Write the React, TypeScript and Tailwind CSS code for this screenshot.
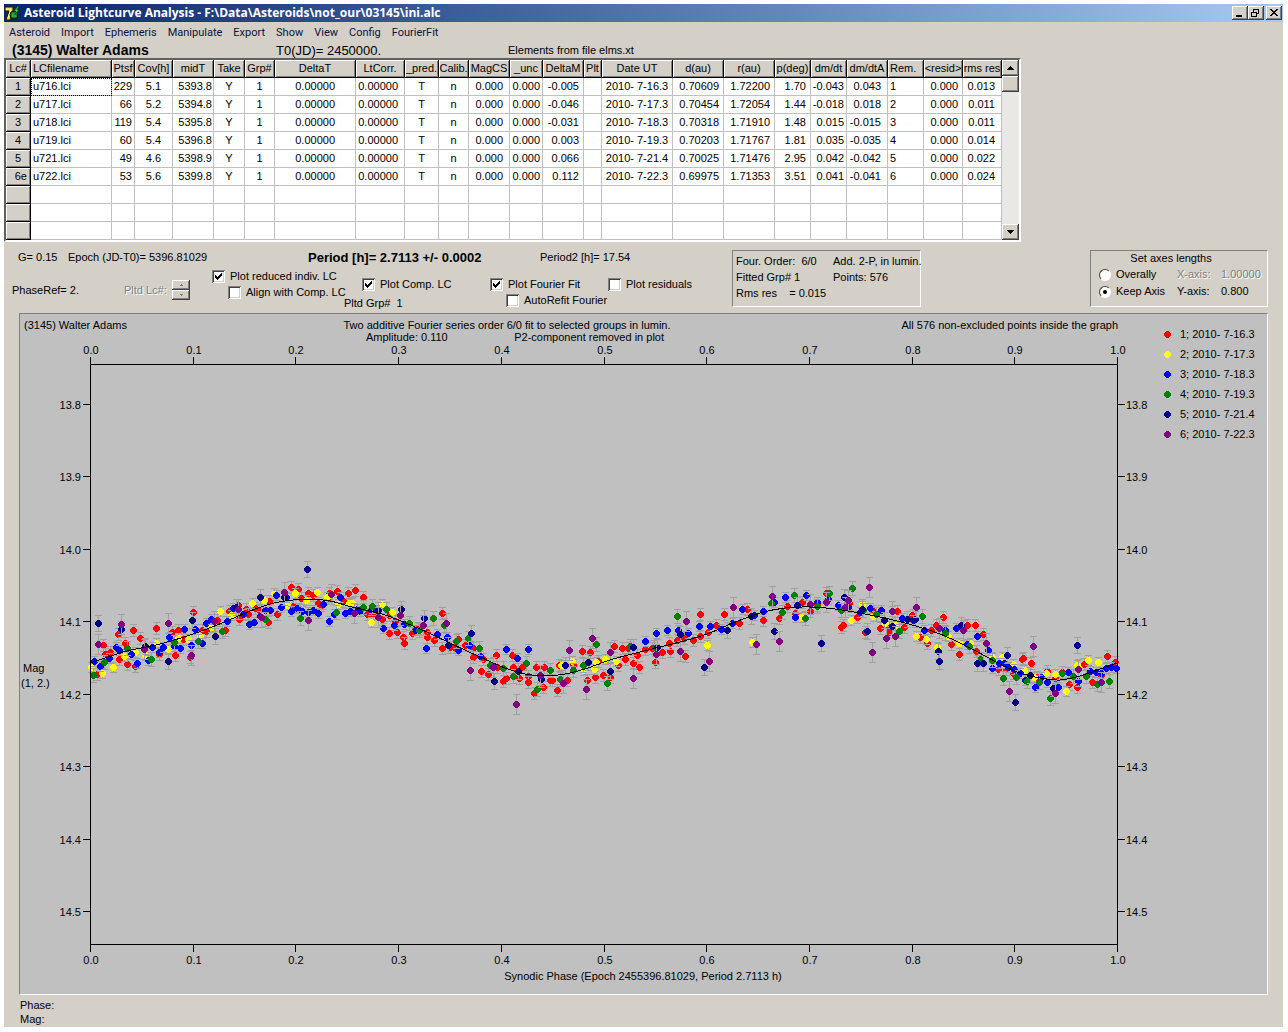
import { Fragment, useState } from 'react';
import type { ReactNode } from 'react';

type Column = {
  title: string;
  width: string;
  cell: string;
  head?: string;
};

type Series = {
  label: string;
  color: string;
  error: number;
  points: number[][];
};

const MENU = ['Asteroid', 'Import', 'Ephemeris', 'Manipulate', 'Export', 'Show', 'View', 'Config', 'FourierFit'];

const COLUMNS: Column[] = [
  { title: 'LCfilename', width: 'w-[81px]', cell: 'text-left pl-[2px]', head: 'text-left pl-[2px]' },
  { title: 'Ptsf', width: 'w-[23px]', cell: 'text-right pr-[2px]' },
  { title: 'Cov[h]', width: 'w-[38px]', cell: 'text-center' },
  { title: 'midT', width: 'w-[41px]', cell: 'text-right pr-px' },
  { title: 'Take', width: 'w-[31px]', cell: 'text-center' },
  { title: 'Grp#', width: 'w-[30px]', cell: 'text-center' },
  { title: 'DeltaT', width: 'w-[81px]', cell: 'text-right pr-5' },
  { title: 'LtCorr.', width: 'w-[49px]', cell: 'text-right pr-[6px]' },
  { title: '_pred.', width: 'w-[34px]', cell: 'text-center' },
  { title: 'Calib.', width: 'w-[30px]', cell: 'text-center' },
  { title: 'MagCS', width: 'w-[41px]', cell: 'text-right pr-[6px]' },
  { title: '_unc', width: 'w-[33px]', cell: 'text-right pr-[2px]' },
  { title: 'DeltaM', width: 'w-[41px]', cell: 'text-right pr-[4px]' },
  { title: 'Plt', width: 'w-[18px]', cell: 'text-center' },
  { title: 'Date UT', width: 'w-[71px]', cell: 'text-center' },
  { title: 'd(au)', width: 'w-[51px]', cell: 'text-right pr-[4px]' },
  { title: 'r(au)', width: 'w-[51px]', cell: 'text-right pr-[4px]' },
  { title: 'p(deg)', width: 'w-[36px]', cell: 'text-right pr-[4px]' },
  { title: 'dm/dt', width: 'w-[36px]', cell: 'text-right pr-[2px]' },
  { title: 'dm/dtA', width: 'w-[41px]', cell: 'text-right pr-[6px]' },
  { title: 'Rem.', width: 'w-[36px]', cell: 'text-left pl-[2px]', head: 'text-left pl-[2px]' },
  { title: '<resid>', width: 'w-[39px]', cell: 'text-right pr-[4px]' },
  { title: 'rms res', width: 'w-[39px]', cell: 'text-right pr-[6px]' },
];

const row = (
  file: string, pts: string, cov: string, mid: string, delta: string, date: string,
  d: string, r: string, p: string, dm: string, dmA: string, rem: string, rms: string,
) => [file, pts, cov, mid, 'Y', '1', '0.00000', '0.00000', 'T', 'n', '0.000', '0.000', delta, '', date, d, r, p, dm, dmA, rem, '0.000', rms];

const ROWS: { id: string; cells: string[] }[] = [
  { id: '1', cells: row('u716.lci', '229', '5.1', '5393.8', '-0.005', '2010- 7-16.3', '0.70609', '1.72200', '1.70', '-0.043', '0.043', '1', '0.013') },
  { id: '2', cells: row('u717.lci', '66', '5.2', '5394.8', '-0.046', '2010- 7-17.3', '0.70454', '1.72054', '1.44', '-0.018', '0.018', '2', '0.011') },
  { id: '3', cells: row('u718.lci', '119', '5.4', '5395.8', '-0.031', '2010- 7-18.3', '0.70318', '1.71910', '1.48', '0.015', '-0.015', '3', '0.011') },
  { id: '4', cells: row('u719.lci', '60', '5.4', '5396.8', '0.003', '2010- 7-19.3', '0.70203', '1.71767', '1.81', '0.035', '-0.035', '4', '0.014') },
  { id: '5', cells: row('u721.lci', '49', '4.6', '5398.9', '0.066', '2010- 7-21.4', '0.70025', '1.71476', '2.95', '0.042', '-0.042', '5', '0.022') },
  { id: '6e', cells: row('u722.lci', '53', '5.6', '5399.8', '0.112', '2010- 7-22.3', '0.69975', '1.71353', '3.51', '0.041', '-0.041', '6', '0.024') },
  { id: '', cells: COLUMNS.map(() => '') },
  { id: '', cells: COLUMNS.map(() => '') },
  { id: '', cells: COLUMNS.map(() => '') },
];

// Points are kept in chart units, the same ones the axes below use
const SERIES: Series[] = [
  {
    label: '1; 2010- 7-16.3',
    color: '#ff0000',
    error: 6,
    points: [
      [97, 674], [103, 645], [105, 654], [110, 652], [118, 634], [119, 659], [125, 643], [127, 664], [133, 630], [135, 666],
      [140, 638], [156, 628], [159, 654], [175, 655], [172, 632], [178, 630], [183, 639], [190, 657], [193, 612], [202, 630],
      [206, 631], [217, 620], [225, 630], [229, 611], [238, 605], [239, 619], [246, 609], [248, 614], [255, 608], [259, 610],
      [269, 601], [268, 622], [277, 614], [291, 587], [298, 589], [301, 598], [293, 606], [308, 593], [313, 595], [318, 603],
      [321, 605], [329, 593], [337, 591], [348, 593], [355, 590], [343, 601], [328, 598], [352, 603], [363, 597], [367, 614],
      [371, 614], [375, 613], [382, 619], [389, 633], [389, 615], [395, 621], [397, 632], [403, 637], [404, 643], [412, 633],
      [418, 628], [427, 632], [427, 637], [434, 640], [442, 613], [442, 648], [450, 647], [458, 639], [454, 647], [465, 645],
      [473, 648], [473, 657], [481, 671], [483, 659], [488, 674], [496, 655], [497, 667], [503, 681], [506, 678], [512, 655],
      [513, 667], [522, 667], [519, 678], [528, 676], [528, 682], [536, 667], [544, 667], [534, 693], [543, 687], [550, 680],
      [552, 680], [557, 690], [559, 665], [567, 680], [573, 665], [582, 651], [587, 680], [590, 652], [595, 677], [598, 661],
      [603, 675], [610, 677], [614, 646], [618, 665], [622, 648], [625, 659], [628, 648], [633, 663], [637, 655], [639, 667],
      [645, 649], [652, 648], [655, 662], [662, 652], [670, 651], [669, 643], [677, 640], [685, 656], [684, 638], [693, 640],
      [700, 614], [700, 636], [708, 632], [716, 625], [724, 614], [739, 623], [747, 609], [763, 620], [779, 618], [787, 606],
      [795, 613], [802, 602], [810, 611], [826, 593], [817, 605], [841, 627], [843, 625], [849, 603], [857, 617], [865, 632],
      [873, 611], [880, 628], [889, 627], [889, 632], [897, 611], [904, 627], [912, 615], [920, 637], [927, 643], [931, 630],
      [936, 625], [943, 617], [951, 644], [959, 654], [967, 625], [975, 625], [976, 651], [983, 634], [998, 669], [1006, 669],
      [1013, 673], [1022, 659], [1023, 658], [1031, 663], [1037, 677], [1047, 671], [1055, 678], [1062, 672], [1069, 684],
      [1077, 687], [1084, 664], [1092, 682], [1101, 675], [1107, 656], [1115, 662],
    ],
  },
  {
    label: '2; 2010- 7-17.3',
    color: '#ffff00',
    error: 5,
    points: [
      [91, 667], [102, 673], [113, 667], [124, 656], [135, 652], [145, 655], [156, 643], [168, 649], [178, 638], [188, 639],
      [200, 636], [211, 627], [220, 611], [231, 615], [252, 603], [264, 600], [274, 593], [287, 605], [295, 593], [306, 600],
      [317, 592], [327, 597], [338, 604], [349, 603], [352, 603], [371, 622], [382, 604], [392, 612], [561, 665], [572, 661],
      [583, 670], [594, 669], [596, 662], [605, 659], [616, 661], [707, 645], [752, 642], [801, 617], [851, 620], [862, 604],
      [873, 616], [885, 623], [895, 625], [916, 636], [926, 639], [937, 647], [948, 636], [959, 643], [970, 643], [992, 657],
      [1002, 657], [1013, 664], [1024, 670], [1034, 677], [1046, 673], [1055, 674], [1066, 691], [1077, 665], [1088, 660],
      [1098, 662],
    ],
  },
  {
    label: '3; 2010- 7-18.3',
    color: '#0000ff',
    error: 5,
    points: [
      [94, 661], [100, 666], [109, 658], [116, 647], [119, 650], [131, 654], [137, 663], [148, 660], [152, 647], [159, 652],
      [163, 647], [169, 637], [180, 648], [174, 646], [184, 629], [191, 645], [195, 629], [202, 643], [206, 623], [211, 619],
      [227, 621], [233, 608], [243, 614], [249, 624], [254, 622], [260, 616], [265, 610], [270, 610], [276, 595], [281, 607],
      [286, 597], [291, 611], [297, 608], [302, 611], [308, 612], [313, 610], [318, 613], [323, 604], [329, 621], [334, 614],
      [340, 597], [345, 613], [350, 611], [357, 609], [360, 611], [371, 610], [376, 610], [383, 628], [394, 625], [404, 624],
      [415, 630], [426, 648], [437, 634], [447, 637], [458, 650], [469, 645], [480, 656], [506, 649], [517, 658], [528, 649],
      [645, 641], [656, 633], [667, 630], [678, 630], [688, 633], [699, 626], [710, 626], [721, 629], [732, 623], [742, 609],
      [754, 615], [763, 611], [774, 602], [785, 597], [795, 617], [806, 595], [817, 602], [828, 599], [838, 605], [848, 607],
      [860, 612], [870, 608], [881, 610], [892, 611], [902, 618], [913, 620], [924, 630], [945, 630], [956, 628], [967, 644],
      [977, 636], [988, 650], [992, 668], [999, 663], [1004, 663], [1008, 667], [1014, 669], [1020, 673], [1025, 680],
      [1035, 687], [1041, 677], [1047, 682], [1058, 687], [1068, 672], [1078, 681], [1090, 671], [1096, 672], [1101, 673],
      [1106, 668], [1111, 667], [1116, 668],
    ],
  },
  {
    label: '4; 2010- 7-19.3',
    color: '#008000',
    error: 7,
    points: [
      [93, 675], [104, 662], [127, 648], [151, 659], [174, 642], [198, 641], [222, 631], [265, 619], [300, 618], [336, 612],
      [363, 607], [372, 606], [386, 609], [409, 623], [419, 630], [433, 618], [444, 625], [456, 641], [468, 638], [479, 648],
      [490, 665], [503, 668], [513, 676], [526, 663], [537, 689], [550, 670], [560, 679], [573, 670], [583, 665], [596, 644],
      [607, 683], [630, 646], [654, 647], [677, 616], [771, 603], [782, 612], [794, 595], [805, 618], [817, 606], [829, 593],
      [841, 610], [852, 588], [863, 610], [876, 614], [899, 631], [922, 616], [945, 633], [969, 646], [980, 659], [992, 660],
      [1003, 678], [1016, 677], [1027, 681], [1039, 682], [1050, 698], [1062, 673], [1073, 676], [1086, 676], [1097, 684],
      [1109, 681],
    ],
  },
  {
    label: '5; 2010- 7-21.4',
    color: '#000080',
    error: 8,
    points: [
      [98, 623], [121, 629], [145, 646], [168, 661], [192, 620], [215, 636], [236, 607], [260, 597], [284, 597], [307, 569],
      [378, 610], [401, 609], [424, 618], [448, 645], [471, 633], [494, 681], [518, 671], [541, 679], [565, 665], [588, 662],
      [610, 671], [633, 647], [657, 647], [680, 634], [704, 667], [727, 630], [751, 616], [774, 631], [797, 605], [821, 643],
      [844, 597], [862, 609], [867, 631], [884, 620], [892, 626], [907, 619], [915, 619], [938, 651], [939, 661], [961, 625],
      [977, 663], [983, 663], [1007, 655], [1015, 702], [1030, 675], [1053, 688], [1077, 645],
    ],
  },
  {
    label: '6; 2010- 7-22.3',
    color: '#800080',
    error: 10,
    points: [
      [98, 644], [121, 624], [144, 649], [168, 623], [191, 655], [214, 621], [238, 609], [261, 617], [284, 592], [308, 620],
      [331, 594], [354, 613], [378, 617], [400, 615], [423, 625], [446, 623], [470, 670], [493, 667], [516, 704], [540, 675],
      [563, 683], [569, 650], [586, 689], [592, 638], [610, 652], [633, 678], [656, 654], [680, 651], [686, 621], [709, 661],
      [733, 607], [756, 644], [772, 596], [779, 641], [810, 604], [826, 602], [845, 607], [848, 600], [869, 587], [872, 652],
      [886, 638], [892, 611], [895, 636], [916, 607], [939, 628], [963, 630], [986, 643], [1009, 691], [1033, 646],
      [1055, 693], [1078, 669], [1101, 682],
    ],
  },
];

const FIT = [
  [90, 663], [105, 658], [127, 651], [160, 644], [193, 634], [222, 623], [250, 611], [270, 604], [285, 601], [308, 599],
  [330, 601], [352, 607], [385, 615], [420, 629], [450, 643], [480, 657], [505, 668], [525, 674], [545, 676], [565, 674],
  [585, 669], [610, 660], [640, 652], [680, 642], [707, 634], [733, 623], [760, 613], [785, 608], [810, 607], [835, 609],
  [870, 615], [905, 623], [940, 634], [970, 648], [1000, 664], [1020, 673], [1040, 678], [1060, 680], [1080, 676],
  [1100, 669], [1117, 663],
];

const LEFT = 90;
const RIGHT = 1117;
const TOP = 364;
const BOTTOM = 944;

const X_TICKS = Array.from({ length: 11 }, (_, i) => ({
  label: (i / 10).toFixed(1),
  x: Math.round(LEFT + (i * (RIGHT - LEFT)) / 10),
}));

const Y_TICKS = Array.from({ length: 8 }, (_, i) => ({
  label: (13.8 + i / 10).toFixed(1),
  y: Math.round(404 + (i * 507) / 7),
}));

// Smooth line through the fit values (Catmull-Rom as cubic beziers)
const smoothPath = (pts: number[][]) => {
  let d = `M${pts[0][0]} ${pts[0][1]}`;
  for (let i = 0; i < pts.length - 1; i++) {
    const p0 = pts[i - 1] || pts[i];
    const p1 = pts[i];
    const p2 = pts[i + 1];
    const p3 = pts[i + 2] || p2;
    d += `C${p1[0] + (p2[0] - p0[0]) / 6} ${p1[1] + (p2[1] - p0[1]) / 6} ${p2[0] - (p3[0] - p1[0]) / 6} ${p2[1] - (p3[1] - p1[1]) / 6} ${p2[0]} ${p2[1]}`;
  }
  return d;
};

// 7px stepped disc
const dot = (x: number, y: number) =>
  `M${x - 1} ${y - 3}h3v1h1v1h1v3h-1v1h-1v1h-3v-1h-1v-1h-1v-3h1v-1h1z`;

const RAISED = 'bg-[#d4d0c8] shadow-[inset_-1px_-1px_#404040,inset_1px_1px_#ffffff,inset_-2px_-2px_#808080]';
const HEAD_CELL = 'h-[18px] border-r border-b border-black bg-[#d4d0c8] p-0 font-normal shadow-[inset_1px_1px_#ffffff,inset_-1px_-1px_#808080]';
const GROUP = 'border border-t-[#808080] border-l-[#808080] border-r-white border-b-white';
const DISABLED = 'text-[#808080] [text-shadow:1px_1px_0_#ffffff]';

function AppIcon() {
  return (
    <svg className="h-4 w-4" viewBox="0 0 16 16" aria-hidden="true">
      <path d="M1 2h8v3L6 15H2L5 6H1z" fill="#e8d820" stroke="#202000" />
      <path d="M2 4h5L4 13" fill="none" stroke="#fff890" />
      <circle cx="10" cy="10" r="4" fill="#187828" stroke="#061806" />
      <path d="M8 9h3M8 11h4" stroke="#58d068" />
      <path d="M14 1l-4 5h2l-2 4 5-5h-2l2-4z" fill="#30e040" stroke="#083008" strokeWidth="0.5" />
    </svg>
  );
}

function CaptionButton({ label, children }: { label: string; children: ReactNode }) {
  return (
    <button type="button" aria-label={label} className={`${RAISED} h-[14px] w-4`}>
      <svg className="h-[14px] w-4" viewBox="0 0 16 14" shapeRendering="crispEdges" fill="none" stroke="#000000">
        {children}
      </svg>
    </button>
  );
}

function CheckBox({ id, label, initial = false }: { id: string; label: string; initial?: boolean }) {
  const [checked, setChecked] = useState(initial);

  return (
    <div className="flex h-4 items-center whitespace-nowrap">
      <span className="relative mr-[5px] h-[13px] w-[13px]">
        <input
          id={id}
          type="checkbox"
          checked={checked}
          onChange={(e) => setChecked(e.target.checked)}
          className="block h-[13px] w-[13px] appearance-none bg-white shadow-[inset_1px_1px_#808080,inset_-1px_-1px_#ffffff,inset_2px_2px_#404040,inset_-2px_-2px_#d4d0c8]"
        />
        {checked && (
          <svg className="pointer-events-none absolute inset-0 h-[13px] w-[13px]" viewBox="0 0 13 13" shapeRendering="crispEdges">
            <path d="M3 5h1v1h1v1h1v-1h1v-1h1v-1h1v-1h1v3h-1v1h-1v1h-1v1h-1v1h-1v-1h-1v-1h-1z" />
          </svg>
        )}
      </span>
      <label htmlFor={id}>{label}</label>
    </div>
  );
}

function AxisRadio({ id, label, checked, onSelect }: { id: string; label: string; checked: boolean; onSelect: () => void }) {
  return (
    <div className="flex h-[17px] w-[78px] items-center whitespace-nowrap">
      <span className="relative mr-[5px] h-3 w-3">
        <input
          id={id}
          type="radio"
          name="axes"
          checked={checked}
          onChange={onSelect}
          className="block h-3 w-3 appearance-none rounded-full border border-t-[#404040] border-l-[#404040] border-r-white border-b-white bg-white"
        />
        {checked && <span className="pointer-events-none absolute top-1 left-1 h-1 w-1 rounded-full bg-black" />}
      </span>
      <label htmlFor={id}>{label}</label>
    </div>
  );
}

function LightcurveTable() {
  return (
    <div className="flex w-fit border-2 border-t-[#606060] border-l-[#606060] border-r-white border-b-white bg-white">
      <table className="w-[996px] table-fixed border-separate border-spacing-0 whitespace-pre">
        <colgroup>
          <col className="w-[25px]" />
          {COLUMNS.map((c) => <col key={c.title} className={c.width} />)}
        </colgroup>
        <thead>
          <tr>
            <th className={`${HEAD_CELL} text-center`}>Lc#</th>
            {COLUMNS.map((c) => (
              <th key={c.title} className={`${HEAD_CELL} ${c.head || 'text-center'}`}>{c.title}</th>
            ))}
          </tr>
        </thead>
        <tbody>
          {ROWS.map((r, i) => (
            <tr key={i}>
              <th className={`${HEAD_CELL} ${r.id === '6e' ? 'pr-[3px] text-right' : 'text-center'}`}>{r.id}</th>
              {r.cells.map((value, j) => (
                <td
                  key={j}
                  className={`h-[18px] border-r border-b border-[#c0c0c0] p-0 ${COLUMNS[j].cell} ${i === 0 && j === 0 ? 'outline-1 -outline-offset-1 outline-dotted outline-black' : ''}`}
                >
                  {value}
                </td>
              ))}
            </tr>
          ))}
        </tbody>
      </table>
      <div className="flex w-[17px] flex-col bg-[#eae8e4]">
        <button type="button" aria-label="Scroll up" className={`${RAISED} flex h-4 items-center justify-center`}>
          <svg className="h-1 w-[7px]" viewBox="0 0 7 4" shapeRendering="crispEdges"><path d="M3 0h1v1h1v1h1v1h1v1H0V3h1V2h1V1h1z" /></svg>
        </button>
        <div className={`${RAISED} h-4`} />
        <button type="button" aria-label="Scroll down" className={`${RAISED} mt-auto flex h-4 items-center justify-center`}>
          <svg className="h-1 w-[7px]" viewBox="0 0 7 4" shapeRendering="crispEdges"><path d="M0 0h7v1H6v1H5v1H4v1H3V3H2V2H1V1H0z" /></svg>
        </button>
      </div>
    </div>
  );
}

function Controls() {
  const [axis, setAxis] = useState('keep');

  return (
    <div className="flex h-[71px] items-start pt-2">
      <div className="w-[728px] shrink-0">
        <div className="flex h-[14px] items-center whitespace-pre">
          <span className="w-16 pl-[14px]">G= 0.15</span>
          <span className="w-60">Epoch (JD-T0)= 5396.81029</span>
          <span className="w-[232px] text-[13px] font-bold">Period [h]= 2.7113 +/- 0.0002</span>
          <span>Period2 [h]= 17.54</span>
        </div>
        <div className="flex">
          <div className="flex w-52 items-center pt-[2px] pl-2 whitespace-nowrap">
            <span className="w-28">PhaseRef= 2.</span>
            <span className={`${DISABLED} w-12`}>Pltd Lc#:</span>
            <div className="flex flex-col">
              <button type="button" disabled aria-label="Next lightcurve" className={`${RAISED} flex h-[10px] w-[18px] items-center justify-center`}>
                <svg className="h-[2px] w-[3px]" viewBox="0 0 3 2" shapeRendering="crispEdges" fill="#808080"><path d="M1 0h1v1h1v1H0V1h1z" /></svg>
              </button>
              <button type="button" disabled aria-label="Previous lightcurve" className={`${RAISED} flex h-[10px] w-[18px] items-center justify-center`}>
                <svg className="h-[2px] w-[3px]" viewBox="0 0 3 2" shapeRendering="crispEdges" fill="#808080"><path d="M0 0h3v1H2v1H1V1H0z" /></svg>
              </button>
            </div>
          </div>
          <div className="w-[132px] pt-1">
            <CheckBox id="reduced" label="Plot reduced indiv. LC" initial />
            <div className="pl-4"><CheckBox id="align" label="Align with Comp. LC" /></div>
          </div>
          <div className="w-[146px] pt-3">
            <div className="pl-[18px]"><CheckBox id="comp" label="Plot Comp. LC" initial /></div>
            <p className="h-[22px] leading-[22px] whitespace-pre">Pltd Grp#  1</p>
          </div>
          <div className="w-[118px] pt-3">
            <CheckBox id="fit" label="Plot Fourier Fit" initial />
            <div className="pl-4"><CheckBox id="refit" label="AutoRefit Fourier" /></div>
          </div>
          <div className="pt-3">
            <CheckBox id="residuals" label="Plot residuals" />
          </div>
        </div>
      </div>

      <div className={`${GROUP} grid h-[57px] w-[189px] shrink-0 grid-cols-[97px_1fr] content-start pt-[2px] pl-[3px] leading-4 whitespace-pre`}>
        <span>Four. Order:  6/0</span>
        <span>Add. 2-P, in lumin.</span>
        <span>Fitted Grp# 1</span>
        <span>Points: 576</span>
        <span>Rms res    = 0.015</span>
      </div>

      <fieldset className={`${GROUP} mr-[15px] ml-auto h-[57px] w-[178px] shrink-0 pl-2`}>
        <p className="pr-6 text-center leading-[15px]">Set axes lengths</p>
        <div className="flex items-center">
          <AxisRadio id="overally" label="Overally" checked={axis === 'overally'} onSelect={() => setAxis('overally')} />
          <span className={`${DISABLED} w-[44px]`}>X-axis:</span>
          <span className={DISABLED}>1.00000</span>
        </div>
        <div className="flex items-center">
          <AxisRadio id="keep" label="Keep Axis" checked={axis === 'keep'} onSelect={() => setAxis('keep')} />
          <span className="w-[44px]">Y-axis:</span>
          <span>0.800</span>
        </div>
      </fieldset>
    </div>
  );
}

function Plot() {
  return (
    <div className={`${GROUP} mx-[15px] bg-[#c0c0c0]`}>
      <svg className="block w-full whitespace-pre" viewBox="20 314 1247 680">
        <text x="24" y="329">(3145) Walter Adams</text>
        <text x="507" y="329" textAnchor="middle">Two additive Fourier series order 6/0 fit to selected groups in lumin.</text>
        <text x="366" y="341">Amplitude: 0.110</text>
        <text x="664" y="341" textAnchor="end">P2-component removed in plot</text>
        <text x="1118" y="329" textAnchor="end">All 576 non-excluded points inside the graph</text>
        <text x="23" y="672">Mag</text>
        <text x="21" y="687">(1, 2.)</text>
        <text x="643" y="980" textAnchor="middle">Synodic Phase (Epoch 2455396.81029, Period 2.7113 h)</text>

        {X_TICKS.map((t) => (
          <Fragment key={t.label}>
            <text x={t.x + 1} y="354" textAnchor="middle">{t.label}</text>
            <text x={t.x + 1} y="964" textAnchor="middle">{t.label}</text>
          </Fragment>
        ))}
        {Y_TICKS.map((t) => (
          <Fragment key={t.label}>
            <text x="81" y={t.y + 5} textAnchor="end">{t.label}</text>
            <text x="1126" y={t.y + 5}>{t.label}</text>
          </Fragment>
        ))}

        <g shapeRendering="crispEdges" stroke="#a0a0a0">
          {SERIES.map((s) => s.points.map(([x, y]) => (
            <Fragment key={`${s.label}-${x}-${y}`}>
              <path d={`M${x - 3} ${y - s.error + 0.5}h7M${x - 3} ${y + s.error + 0.5}h7M${x + 0.5} ${y - s.error}v${2 * s.error}`} />
              <path d={dot(x, y)} fill={s.color} stroke="none" />
            </Fragment>
          )))}
        </g>

        <g shapeRendering="crispEdges" fill="none" stroke="#000000">
          <path d={smoothPath(FIT)} />
          <path d={`M${LEFT} ${TOP + 0.5}H${RIGHT}M${LEFT} ${BOTTOM + 0.5}H${RIGHT}M${LEFT + 0.5} ${TOP - 7}V${BOTTOM + 8}M${RIGHT + 0.5} ${TOP - 7}V${BOTTOM + 8}`} />
          {X_TICKS.map((t) => (
            <path key={t.label} d={`M${t.x + 0.5} ${TOP - 7}v7M${t.x + 0.5} ${BOTTOM}v8`} />
          ))}
          {Y_TICKS.map((t) => (
            <path key={t.label} d={`M${LEFT - 7} ${t.y + 0.5}h7M${RIGHT} ${t.y + 0.5}h8`} />
          ))}
        </g>

        {SERIES.map((s, i) => (
          <Fragment key={s.label}>
            <path d={dot(1167, 334 + i * 20)} fill={s.color} shapeRendering="crispEdges" />
            <text x="1180" y={338 + i * 20}>{s.label}</text>
          </Fragment>
        ))}
      </svg>
    </div>
  );
}

export default function App() {
  return (
    <div className="min-h-screen bg-white pt-1 pr-[5px] pl-1 text-[11px] leading-none text-black [font-family:'Liberation_Sans',Arial,sans-serif]">
      <main className="bg-[#d4d0c8] pb-px">
        <header className="flex h-[18px] items-center bg-linear-to-r from-[#0a246a] to-[#a6caf0] pr-px">
          <AppIcon />
          <h1 className="ml-1 text-[12px] font-bold whitespace-nowrap text-white [font-family:'Open_Sans',sans-serif]">
            Asteroid Lightcurve Analysis - F:\Data\Asteroids\not_our\03145\ini.alc
          </h1>
          <div className="ml-auto flex">
            <CaptionButton label="Minimize"><path d="M4 10h6" strokeWidth="2" /></CaptionButton>
            <CaptionButton label="Restore">
              <path d="M5 3h6M10.5 3v5M5.5 3v3M8 7.5h3M3 6h6M3.5 6v5M8.5 6v5M3 10.5h6" />
            </CaptionButton>
            <span className="w-[2px]" />
            <CaptionButton label="Close"><path d="M4 3l7 7M5 3l7 7M11 3l-7 7M12 3l-7 7" /></CaptionButton>
          </div>
        </header>

        <nav className="flex h-5 items-center gap-[11px] pl-[5px] text-[11px] text-[#0a1440] [font-family:Roboto,sans-serif]">
          {MENU.map((item) => <button key={item} type="button">{item}</button>)}
        </nav>

        <div className="flex h-4 items-center">
          <h2 className="w-[272px] pl-2 text-[14px] font-bold">(3145) Walter Adams</h2>
          <span className="w-[232px] text-[13px]">T0(JD)= 2450000.</span>
          <span>Elements from file elms.xt</span>
        </div>

        <LightcurveTable />
        <Controls />
        <Plot />

        <footer className="pt-[3px] pl-4 leading-[14px]">
          <p>Phase:</p>
          <p>Mag:</p>
        </footer>
      </main>
    </div>
  );
}
